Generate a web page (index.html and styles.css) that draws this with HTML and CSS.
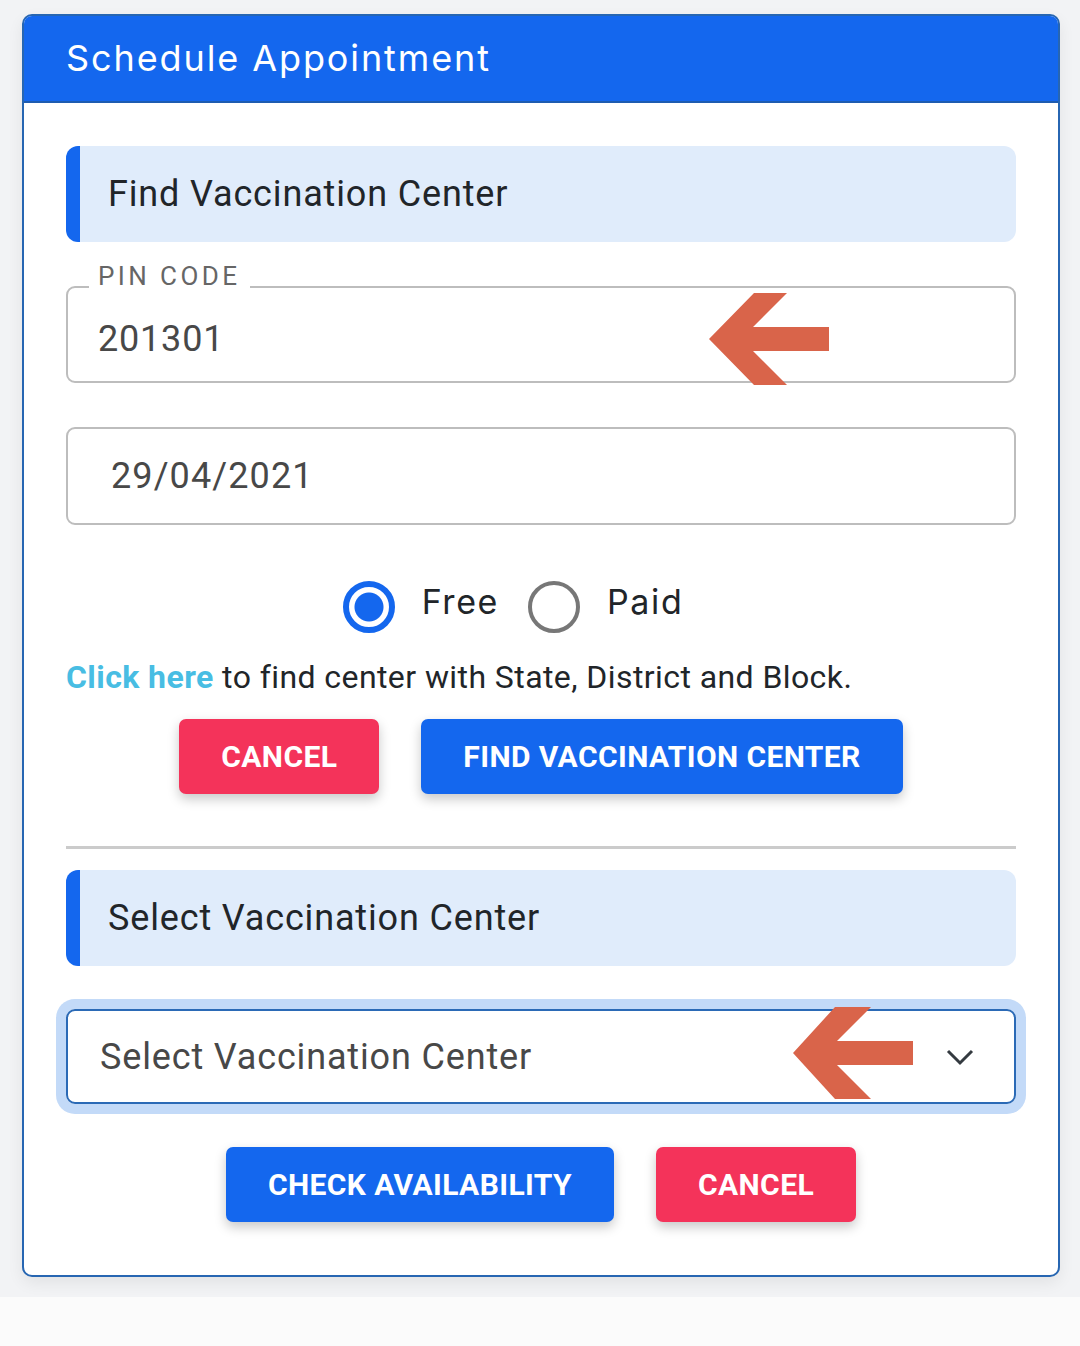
FILE: index.html
```html
<!DOCTYPE html>
<html lang="en">
<head>
    <meta charset="UTF-8">
    <meta name="viewport" content="width=device-width, initial-scale=1.0">
    <title>Schedule Appointment</title>
    <link rel="stylesheet" href="styles.css">
</head>
<body>
    <div class="page">
        <div class="card">
            <!-- Cabecera -->
            <div class="card-header">Schedule Appointment</div>

            <div class="card-body">
                <!-- Buscar centro -->
                <div class="section-title">Find Vaccination Center</div>

                <div class="field">
                    <label class="field-label" for="pin">PIN CODE</label>
                    <input class="field-input pin-input" id="pin" type="text" value="201301">
                    <svg class="pointer pointer-pin" width="120" height="92" viewBox="0 0 120 92">
                        <polygon points="0,46 45,0 78,0 44,34 120,34 120,58 44,58 78,92 45,92" fill="#d9644a"/>
                    </svg>
                </div>

                <div class="field">
                    <input class="field-input date-input" type="text" value="29/04/2021">
                </div>

                <div class="radio-row">
                    <label class="radio-option">
                        <input type="radio" name="fee" checked>
                        <span>Free</span>
                    </label>
                    <label class="radio-option">
                        <input type="radio" name="fee">
                        <span>Paid</span>
                    </label>
                </div>

                <p class="hint"><a href="#" class="hint-link">Click here</a> to find center with State, District and Block.</p>

                <div class="btn-row">
                    <button class="btn btn-red">CANCEL</button>
                    <button class="btn btn-blue">FIND VACCINATION CENTER</button>
                </div>

                <hr class="divider">

                <!-- Seleccionar centro -->
                <div class="section-title">Select Vaccination Center</div>

                <div class="select-wrap">
                    <div class="select-box">
                        <span>Select Vaccination Center</span>
                        <svg class="chevron" width="28" height="17" viewBox="0 0 28 17">
                            <polyline points="2,2 14,14 26,2" fill="none" stroke="#343a40" stroke-width="3"/>
                        </svg>
                    </div>
                    <svg class="pointer pointer-select" width="120" height="92" viewBox="0 0 120 92">
                        <polygon points="0,46 42,0 78,0 44,34 120,34 120,58 44,58 78,92 42,92" fill="#d9644a"/>
                    </svg>
                </div>

                <div class="btn-row btn-row-last">
                    <button class="btn btn-blue">CHECK AVAILABILITY</button>
                    <button class="btn btn-red">CANCEL</button>
                </div>
            </div>
        </div>
    </div>
</body>
</html>
```

FILE: styles.css
```css
/* Estilos generales */
body {
    margin: 0;
    font-family: 'Roboto', sans-serif;
    background-color: #fbfbfb;
    color: #212529;
}

.page {
    background-color: #f2f3f5;
    padding: 14px 20px 20px 22px;
    box-shadow: 0 12px 30px rgba(0, 0, 0, 0.04);
}

/* Tarjeta */
.card {
    background-color: #fff;
    border: 2px solid #2766b2;
    border-radius: 10px;
    overflow: hidden;
    box-shadow: 0 6px 16px rgba(0, 0, 0, 0.07);
}

.card-header {
    background-color: #1467ee;
    border-bottom: 2px solid #1e5cb0;
    color: #fff;
    font-family: 'Inter', sans-serif;
    font-size: 36px;
    letter-spacing: 1.9px;
    height: 85px;
    line-height: 84px;
    padding-left: 42px;
}

.card-body {
    padding: 43px 42px 53px 42px;
    display: flex;
    flex-direction: column;
}

/* Titulos de seccion */
.section-title {
    background-color: #e0ecfb;
    border-left: 14px solid #1467ee;
    border-radius: 12px;
    height: 96px;
    line-height: 96px;
    padding-left: 28px;
    font-size: 36px;
    letter-spacing: 0.85px;
    color: #212529;
}

/* Campos */
.field {
    position: relative;
    margin-top: 44px;
}

.field-input {
    display: block;
    width: 100%;
    box-sizing: border-box;
    height: 97px;
    border: 2px solid #bdbdbd;
    border-radius: 9px;
    padding: 0 30px;
    font-family: 'Roboto', sans-serif;
    font-size: 36px;
    letter-spacing: 0.8px;
    color: #484848;
    background: #fff;
    outline: none;
}

.pin-input {
    padding-top: 9px;
}

.date-input {
    height: 98px;
    padding-left: 43px;
    letter-spacing: 1.1px;
}

.field-label {
    position: absolute;
    left: 23px;
    top: -25px;
    padding: 0 10px 0 9px;
    background-color: #fff;
    font-size: 26px;
    line-height: 30px;
    letter-spacing: 3.4px;
    color: #666;
}

.pointer {
    position: absolute;
}

.pointer-pin {
    left: 643px;
    top: 7px;
}

.pointer-select {
    left: 727px;
    top: -2px;
}

/* Radios */
.radio-row {
    display: flex;
    justify-content: center;
    gap: 29px;
    margin-top: 56px;
    padding-right: 56px;
}

.radio-option {
    display: flex;
    align-items: center;
    gap: 27px;
    font-family: 'Inter', sans-serif;
    font-size: 34px;
    letter-spacing: 1.6px;
    color: #212529;
}

.radio-option span {
    margin-top: -12px;
}

.radio-option input {
    appearance: none;
    margin: 0;
    width: 52px;
    height: 52px;
    border: 4px solid #777;
    border-radius: 50%;
    box-sizing: border-box;
}

.radio-option input:checked {
    border: 6px solid #1467ee;
    background: radial-gradient(circle, #1467ee 14px, #fff 15px);
}

/* Texto de ayuda */
.hint {
    margin: 25px 0 0 0;
    font-size: 32px;
    line-height: 38px;
    letter-spacing: 0.42px;
    color: #212529;
}

.hint-link {
    color: #48bde3;
    font-weight: bold;
    text-decoration: none;
}

/* Botones */
.btn-row {
    display: flex;
    justify-content: center;
    gap: 42px;
    margin-top: 23px;
}

.btn-row-last {
    margin-top: 43px;
}

.btn {
    height: 75px;
    border: none;
    border-radius: 7px;
    padding: 0 42px;
    font-family: 'Roboto', sans-serif;
    font-weight: bold;
    font-size: 30px;
    letter-spacing: 0.4px;
    color: #fff;
    box-shadow: 0 5px 12px rgba(0, 0, 0, 0.22);
    cursor: pointer;
}

.btn-red {
    background-color: #f4335a;
}

.btn-blue {
    background-color: #1467ee;
}

.divider {
    border: none;
    height: 3px;
    background-color: #cbcbcb;
    margin: 52px 0 21px 0;
}

/* Select */
.select-wrap {
    position: relative;
    margin-top: 43px;
}

.select-box {
    height: 95px;
    box-sizing: border-box;
    border: 2px solid #2b6ab6;
    border-radius: 9px;
    box-shadow: 0 0 0 10px #c3daf8;
    display: flex;
    align-items: center;
    justify-content: space-between;
    padding: 0 40px 0 32px;
    font-size: 36px;
    letter-spacing: 0.85px;
    color: #484848;
}

.chevron {
    margin-top: 2px;
}
```
